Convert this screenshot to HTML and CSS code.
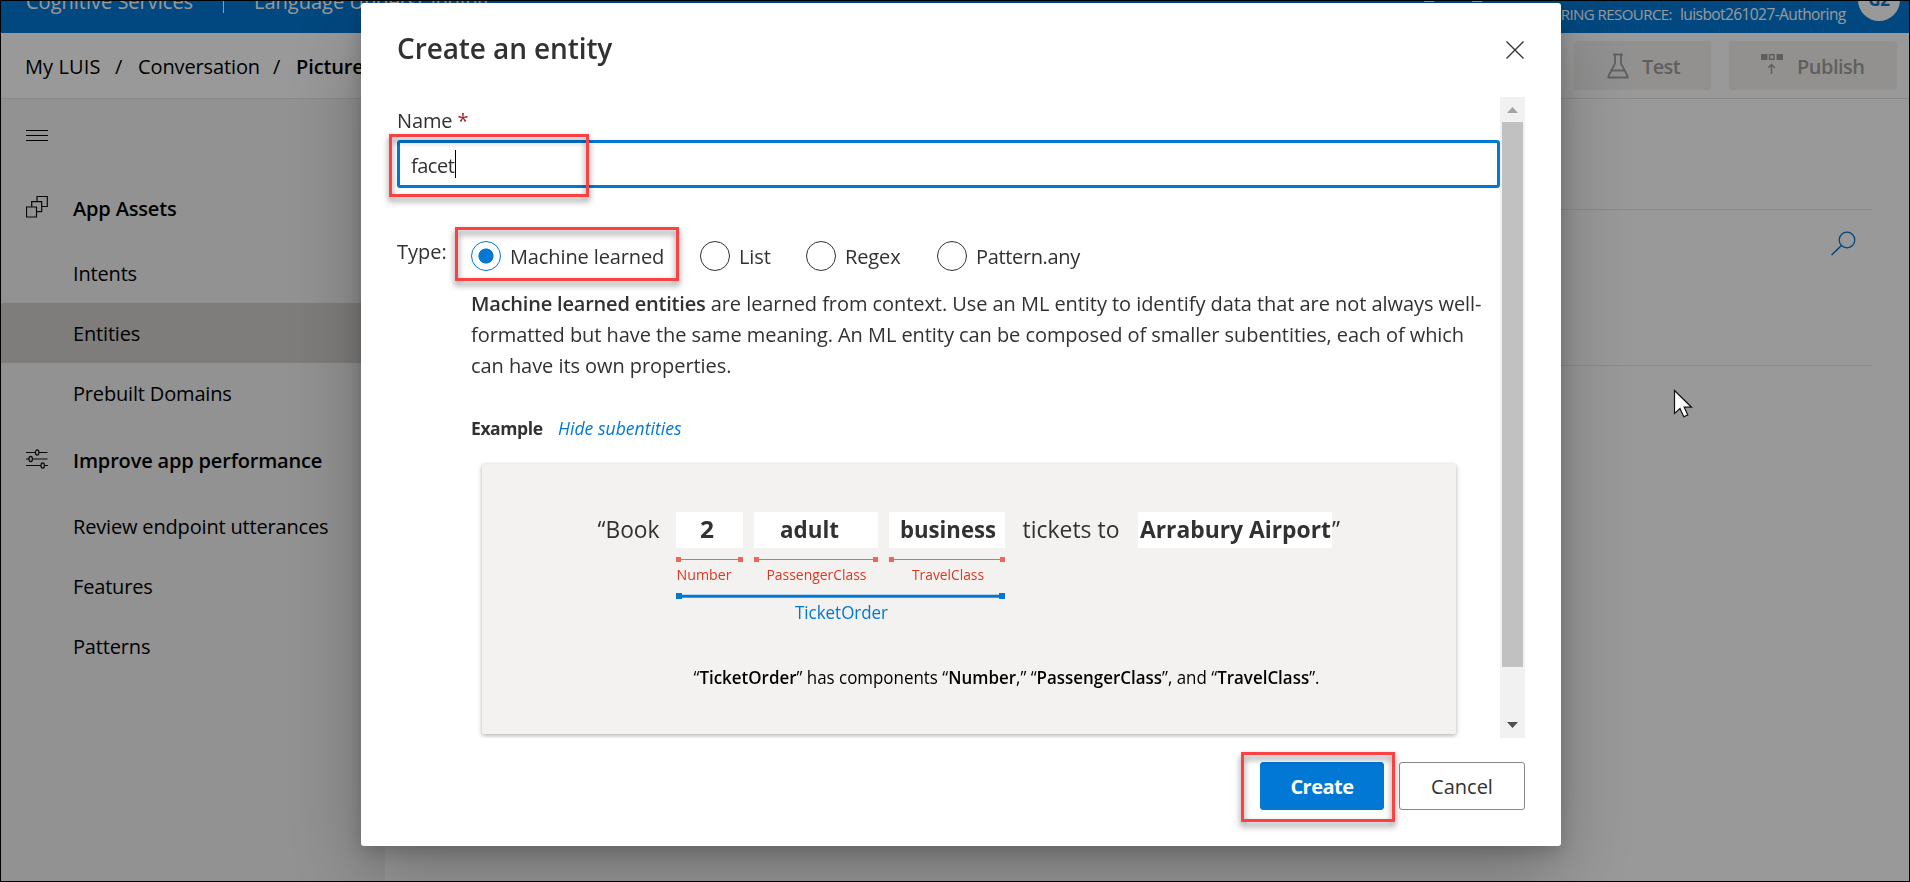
FILE: index.html
```html
<!DOCTYPE html>
<html lang="en">
<head>
<meta charset="utf-8">
<title>LUIS - Create an entity</title>
<link rel="stylesheet" href="styles.css">
</head>
<body>
<div class="app">
  <header class="topbar">
    <div class="brand"><span class="suite">Cognitive Services</span><span class="divider"></span><span class="product">Language Understanding</span></div>
    <div class="account"><span class="icons"><i></i><i></i></span><span class="resource-label">AUTHORING RESOURCE:</span><span class="resource">luisbot261027-Authoring</span><span class="avatar">G2</span></div>
  </header>
  <div class="crumbbar">
    <nav class="crumbs"><span class="c1">My LUIS</span><span class="slash">/</span><span class="c2">Conversation</span><span class="slash">/</span><b>Pictures</b></nav>
    <div class="actions">
      <div class="action test"><svg width="22" height="26" viewBox="0 0 22 26"><path d="M6 1.5h10M8 1.5v9L1.500 23v1.500h19V23L14 10.500v-9M5 17.500h12" fill="none" stroke="#a19f9d" stroke-width="1.800"/></svg><span>Test</span></div>
      <div class="action publish"><svg width="22" height="22" viewBox="0 0 22 22"><path d="M0 1h6.500v6H0zM15.500 1H22v6h-6.500z" fill="#a19f9d"/><path d="M8.500 1.800h4.500v4.500H8.500zM10.500 21V11.500M7.200 14.800l3.300-3.300 3.300 3.300" fill="none" stroke="#a19f9d" stroke-width="1.500"/></svg><span>Publish</span></div>
    </div>
  </div>
  <div class="body">
    <aside class="side">
      <svg class="burger" width="22" height="12" viewBox="0 0 22 12"><path d="M0 .5h22M0 5.500h22M0 10.500h22" stroke="#000" stroke-width="1"/></svg>
      <div class="group first"><svg width="22" height="22" viewBox="0 0 22 22"><path d="M.5 11h10v10H.5zM5.700 11V5.700h10v10h-5M11 5.700V.5h10.300v10h-5.600" fill="none" stroke="#111" stroke-width="1.200"/></svg><span>App Assets</span></div>
      <div class="item">Intents</div>
      <div class="item on">Entities</div>
      <div class="item">Prebuilt Domains</div>
      <div class="group second"><svg width="22" height="20" viewBox="0 0 22 20"><g fill="none" stroke="#111" stroke-width="1.200"><path d="M0 3.500h9.500M13 3.500h8.500M0 10h3M6.500 10h15M0 16.500h15M18.500 16.500H22"/><ellipse cx="11.200" cy="3.500" rx="1.700" ry="2.600"/><ellipse cx="4.700" cy="10" rx="1.700" ry="2.600"/><ellipse cx="16.700" cy="16.500" rx="1.700" ry="2.600"/></g></svg><span>Improve app performance</span></div>
      <div class="item">Review endpoint utterances</div>
      <div class="item">Features</div>
      <div class="item">Patterns</div>
    </aside>
    <main class="content">
      <div class="band"></div>
      <div class="tools"><svg width="26" height="26" viewBox="0 0 26 26"><circle cx="17" cy="9" r="7.800" fill="none" stroke="#0078d4" stroke-width="1.300"/><path d="M11.500 14.500L1.500 24" stroke="#0078d4" stroke-width="1.500"/></svg></div>
    </main>
  </div>
</div>

<div class="overlay">
  <section class="dialog">
    <header class="dialog-head"><h1>Create an entity</h1><svg width="18" height="18" viewBox="0 0 18 18"><path d="M.5.5l17 17M17.500.5l-17 17" stroke="#323130" stroke-width="1.300"/></svg></header>
    <div class="scroller">
      <div class="form">
        <label class="name-label">Name <i>*</i></label>
        <div class="input"><span>facet</span><span class="caret"></span></div>
        <div class="types">
          <span class="type-label">Type:</span>
          <div class="radio on r1"><span class="dot"></span><span>Machine learned</span></div>
          <div class="radio r2"><span class="dot"></span><span>List</span></div>
          <div class="radio r3"><span class="dot"></span><span>Regex</span></div>
          <div class="radio r4"><span class="dot"></span><span>Pattern.any</span></div>
        </div>
        <p class="desc"><b>Machine learned entities</b> are learned from context. Use an ML entity to identify data that are not always well-<br>formatted but have the same meaning. An ML entity can be composed of smaller subentities, each of which<br>can have its own properties.</p>
        <div class="example"><b>Example</b><em>Hide subentities</em></div>
        <div class="card">
          <svg width="974" height="270" viewBox="482 464 974 270">
            <g fill="#fff"><path d="M676 512h67v36h-67zM754 512h124v36H754zM889 512h116v36H889zM1138 512h194v36h-194z"/></g>
            <g font-size="24" fill="#323130">
              <text x="597.500" y="537.500" textLength="62" lengthAdjust="spacingAndGlyphs">“Book</text>
              <text x="1022.500" y="537.500" textLength="97" lengthAdjust="spacingAndGlyphs">tickets to</text>
              <text x="1332" y="537.500" textLength="8" lengthAdjust="spacingAndGlyphs">”</text>
              <g font-weight="700">
                <text x="700" y="537.500" textLength="14" lengthAdjust="spacingAndGlyphs">2</text>
                <text x="780" y="537.500" textLength="59" lengthAdjust="spacingAndGlyphs">adult</text>
                <text x="900" y="537.500" textLength="96" lengthAdjust="spacingAndGlyphs">business</text>
                <text x="1140" y="537.500" textLength="191" lengthAdjust="spacingAndGlyphs">Arrabury Airport</text>
              </g>
            </g>
            <g fill="#ef6950"><path d="M676 559h67v1h-67zM754 559h124v1H754zM889 559h116v1H889z"/><path d="M676 557h5v5h-5zM738 557h5v5h-5zM754 557h5v5h-5zM873 557h5v5h-5zM889 557h5v5h-5zM1000 557h5v5h-5z"/></g>
            <g font-size="15" fill="#e0371f">
              <text x="676.500" y="580" textLength="55" lengthAdjust="spacingAndGlyphs">Number</text>
              <text x="766.500" y="580" textLength="100" lengthAdjust="spacingAndGlyphs">PassengerClass</text>
              <text x="912" y="580" textLength="72" lengthAdjust="spacingAndGlyphs">TravelClass</text>
            </g>
            <path d="M676 594.700h329v3H676zM676 593h6v6h-6zM999 593h6v6h-6z" fill="#0078d4"/>
            <text x="795" y="619" font-size="18" fill="#0078d4" textLength="93" lengthAdjust="spacingAndGlyphs">TicketOrder</text>
            <text x="693.500" y="683.500" font-size="17.500" fill="#000" textLength="626" lengthAdjust="spacingAndGlyphs">“<tspan font-weight="600">TicketOrder</tspan>” has components “<tspan font-weight="600">Number</tspan>,” “<tspan font-weight="600">PassengerClass</tspan>”, and “<tspan font-weight="600">TravelClass</tspan>”.</text>
          </svg>
        </div>
      </div>
      <div class="scrollbar">
        <svg width="25" height="25" viewBox="0 0 25 25"><path d="M12.500 10l5.500 6H7z" fill="#a3a3a3"/></svg>
        <div class="thumb"></div>
        <svg class="down" width="25" height="25" viewBox="0 0 25 25"><path d="M12.500 15l5.500-6H7z" fill="#505050"/></svg>
      </div>
    </div>
    <footer class="buttons"><button class="primary">Create</button><button>Cancel</button></footer>
  </section>
</div>
<div class="mark m1"></div>
<div class="mark m2"></div>
<div class="mark m3"></div>
<svg class="cursor" width="20" height="29" viewBox="0 0 20 29"><path d="M1.500 1.500v23l5.500-5 3.800 8.200 4-1.800-3.600-7.700h7.300z" fill="#fff" stroke="#111" stroke-width="1.200"/></svg>
<div class="frame"></div>
</body>
</html>
```
FILE: styles.css
```css
* { box-sizing: border-box; }
body { margin: 0; height: 882px; overflow: hidden; font-family: "Open Sans", "Noto Sans", sans-serif; font-size: 20px; letter-spacing: -0.12px; color: #000; background: #fff; }
svg { display: block; flex: none; }
.app { display: flex; flex-direction: column; height: 882px; white-space: nowrap; }

.topbar { height: 33px; background: #0078d4; color: #fff; display: flex; justify-content: space-between; overflow: hidden; }
.brand { display: flex; padding-left: 26px; margin-top: -12px; height: 26px; line-height: 27px; }
.divider { width: 1px; height: 25px; background: #fff; margin: 0 30px 0 29px; }
.suite { width: 168px; letter-spacing: 0; }
.product { letter-spacing: 0; }
.account { display: flex; font-size: 15.5px; line-height: 29px; padding-right: 10px; letter-spacing: -0.2px; }
.icons { display: flex; gap: 38px; margin-right: 30px; }
.icons i { width: 10px; height: 2px; background: #fff; }
.resource-label { font-size: 15px; letter-spacing: -0.55px; }
.resource { margin-left: 8px; width: 166px; letter-spacing: -0.58px; }
.avatar { width: 42px; height: 42px; margin: -21px 0 0 12px; border-radius: 50%; background: #fff; color: #0078d4; font-size: 17px; font-weight: 700; line-height: 42px; text-align: center; }

.crumbbar { height: 66px; border-bottom: 1px solid #e4e4e4; display: flex; justify-content: space-between; padding: 8px 13px 0 25px; }
.crumbs { display: flex; height: 50px; line-height: 51px; }
.crumbs b { font-weight: 600; }
.c1 { width: 74px; letter-spacing: 0.1px; }
.c2 { width: 119px; }
.slash { width: 39px; text-align: center; }
.actions { display: flex; gap: 18px; }
.action { height: 49px; background: #f3f2f1; border-radius: 3px; color: #a19f9d; font-weight: 600; display: flex; align-items: center; }
.action span { padding-top: 1px; }
.test { width: 137px; padding-left: 33px; gap: 13px; letter-spacing: -0.6px; }
.publish { width: 168px; padding-left: 32px; gap: 14px; letter-spacing: -0.5px; }
.publish svg { margin-top: -4px; }

.body { flex: 1; display: flex; }
.side { width: 385px; background: #f3f3f3; }
.burger { margin: 31px 0 0 26px; }
.group { height: 73px; display: flex; align-items: center; padding-left: 26px; gap: 25px; font-weight: 600; letter-spacing: -0.17px; }
.group span { padding-top: 2px; }
.group.first { margin-top: 28px; }
.group.first span { padding-top: 4px; }
.group.second svg { margin-top: -2px; }
.item { height: 60px; line-height: 62px; padding-left: 73px; letter-spacing: -0.17px; }
.item.on { background: #d2d0ce; }
.content { flex: 1; padding-right: 37px; }
.band { height: 111px; border-bottom: 1px solid #e8e8e8; }
.tools { height: 156px; border-bottom: 1px solid #e8e8e8; display: flex; justify-content: flex-end; padding: 21px 17px 0 0; }

.overlay { position: fixed; inset: 0; background: rgba(0, 0, 0, .4); padding: 3px 349px 0 361px; }
.dialog { height: 843px; background: #fff; border-radius: 3px; box-shadow: 0 32px 80px rgba(0, 0, 0, .25), 0 6px 20px rgba(0, 0, 0, .2); padding: 0 36px; color: #323130; }
.dialog-head { height: 94px; display: flex; justify-content: space-between; padding: 27px 1px 0 0; }
.dialog-head svg { margin: 11px 0 0; }
h1 { margin: 0; font-size: 28px; font-weight: 600; line-height: 36px; letter-spacing: -0.1px; }
.scroller { display: flex; height: 641px; overflow: hidden; white-space: nowrap; margin-left: -12px; }
.form { width: 1115px; padding-left: 12px; flex: none; }
.name-label { display: block; height: 43px; line-height: 47px; font-weight: 500; }
.name-label i { color: #a4262c; font-style: normal; }
.input { height: 48px; border: 3px solid #0078d4; border-radius: 3px; padding-left: 11px; display: flex; align-items: center; letter-spacing: -0.5px; }
.input span:first-child { width: 44px; padding-top: 2px; }
.caret { width: 1px; height: 28px; background: #000; }
.types { display: flex; align-items: center; height: 68px; margin-top: 34px; }
.type-label { width: 74px; font-weight: 500; margin-top: -9px; letter-spacing: 0; }
.radio { display: flex; align-items: center; gap: 9px; }
.dot { width: 30px; height: 30px; border: 1px solid #323130; border-radius: 50%; }
.radio.on .dot { border-color: #0078d4; background: radial-gradient(circle, #0078d4 7.200px, #fff 7.900px); }
.r1 { width: 229px; }
.r2 { width: 106px; }
.r3 { width: 131px; }
.r4 { letter-spacing: -0.35px; }
.desc { margin: -2px 0 0 74px; line-height: 31px; letter-spacing: -0.06px; }
.desc b { font-weight: 600; letter-spacing: -0.2px; }
.example { margin: 34px 0 0 74px; height: 49px; font-size: 17.5px; line-height: 27px; letter-spacing: 0; display: flex; gap: 15px; }
.example b { font-weight: 700; width: 72px; letter-spacing: -0.4px; }
.example em { color: #0078d4; letter-spacing: 0.05px; }
.card { width: 974px; height: 270px; margin: 0 0 0 85px; background: #f3f2f1; border-radius: 2px; box-shadow: 0 2px 5px rgba(0, 0, 0, .25), 0 0 3px rgba(0, 0, 0, .1); letter-spacing: 0; }
.scrollbar { width: 25px; flex: none; background: #f1f1f1; display: flex; flex-direction: column; }
.thumb { height: 545px; margin: 0 2px; background: #c1c1c1; }
.down { margin-top: auto; }
.buttons { display: flex; justify-content: flex-end; gap: 15px; padding-top: 24px; }
button { width: 126px; height: 48px; border: 1px solid #8a8886; border-radius: 3px; background: #fff; color: #323130; font: 500 20px "Open Sans", sans-serif; letter-spacing: 0; padding: 0; }
button.primary { width: 124px; background: #0078d4; border-color: #0078d4; color: #fff; font-weight: 700; letter-spacing: -0.5px; }

.mark { position: absolute; border: 3px solid #fb4144; filter: drop-shadow(0 4px 3px rgba(0, 0, 0, .5)); }
.m1 { left: 389px; top: 134px; width: 200px; height: 63px; }
.m2 { left: 455px; top: 227px; width: 224px; height: 54px; }
.m3 { left: 1241px; top: 752px; width: 154px; height: 70px; }
.cursor { position: absolute; left: 1673px; top: 389px; }
.frame { position: fixed; inset: 0; border: 1px solid #000; }
```
